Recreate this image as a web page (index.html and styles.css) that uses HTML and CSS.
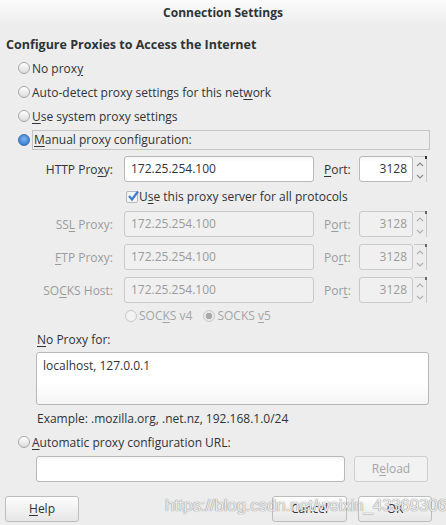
FILE: index.html
```html
<!DOCTYPE html>
<html>
<head>
<meta charset="utf-8">
<link rel="stylesheet" href="styles.css">
</head>
<body>
<div class="window">
  <div class="titlebar">Connection Settings</div>
  <div class="content">
    <div class="heading">Configure Proxies to Access the Internet</div>
    <div class="radio-row"><span class="radio"></span><span>No prox<u>y</u></span></div>
    <div class="radio-row"><span class="radio"></span><span>Auto-detect proxy settings for this net<u>w</u>ork</span></div>
    <div class="radio-row"><span class="radio"></span><span><u>U</u>se system proxy settings</span></div>
    <div class="radio-row"><span class="radio checked"></span><span class="focus-box"><u>M</u>anual proxy configuration:</span></div>

    <div class="proxy-row first">
      <label class="plabel">HTTP Pro<u>x</u>y:</label>
      <div class="input">172.25.254.100</div>
      <label class="portlabel"><u>P</u>ort:</label>
      <div class="port">3128</div>
      <div class="spin"><svg width="12" height="26" viewBox="0 0 12 26"><path d="M3 9 L6 6 L9 9" fill="none" stroke="#8a8a8a" stroke-width="1.2"/><path d="M3 18 L6 21 L9 18" fill="none" stroke="#8a8a8a" stroke-width="1.2"/></svg></div>
    </div>

    <div class="check-row">
      <span class="check"><svg width="12" height="12" viewBox="0 0 12 12"><path d="M2 6 L5 9.5 L11 1.5" fill="none" stroke="#3a7fd0" stroke-width="2.2"/></svg></span>
      <span>U<u>s</u>e this proxy server for all protocols</span>
    </div>

    <div class="proxy-row disabled">
      <label class="plabel">SS<u>L</u> Proxy:</label>
      <div class="input">172.25.254.100</div>
      <label class="portlabel">P<u>o</u>rt:</label>
      <div class="port">3128</div>
      <div class="spin"><svg width="12" height="26" viewBox="0 0 12 26"><path d="M3 9 L6 6 L9 9" fill="none" stroke="#b0b0b0" stroke-width="1.2"/><path d="M3 18 L6 21 L9 18" fill="none" stroke="#b0b0b0" stroke-width="1.2"/></svg></div>
    </div>
    <div class="proxy-row disabled">
      <label class="plabel"><u>F</u>TP Proxy:</label>
      <div class="input">172.25.254.100</div>
      <label class="portlabel">Po<u>r</u>t:</label>
      <div class="port">3128</div>
      <div class="spin"><svg width="12" height="26" viewBox="0 0 12 26"><path d="M3 9 L6 6 L9 9" fill="none" stroke="#b0b0b0" stroke-width="1.2"/><path d="M3 18 L6 21 L9 18" fill="none" stroke="#b0b0b0" stroke-width="1.2"/></svg></div>
    </div>
    <div class="proxy-row disabled">
      <label class="plabel">SO<u>C</u>KS Host:</label>
      <div class="input">172.25.254.100</div>
      <label class="portlabel">Por<u>t</u>:</label>
      <div class="port">3128</div>
      <div class="spin"><svg width="12" height="26" viewBox="0 0 12 26"><path d="M3 9 L6 6 L9 9" fill="none" stroke="#b0b0b0" stroke-width="1.2"/><path d="M3 18 L6 21 L9 18" fill="none" stroke="#b0b0b0" stroke-width="1.2"/></svg></div>
    </div>

    <div class="socks-row">
      <span class="radio dis"></span><span>SOC<u>K</u>S v4</span>
      <span class="radio dis checked-dis gap"></span><span>SOCKS <u>v</u>5</span>
    </div>

    <div class="noproxy-label"><u>N</u>o Proxy for:</div>
    <div class="textarea">localhost, 127.0.0.1</div>
    <div class="example">Example: .mozilla.org, .net.nz, 192.168.1.0/24</div>

    <div class="radio-row auto"><span class="radio"></span><span><u>A</u>utomatic proxy configuration URL:</span></div>
    <div class="url-row">
      <div class="input url"></div>
      <div class="button reload">R<u>e</u>load</div>
    </div>

    <div class="button-row">
      <div class="button help"><u>H</u>elp</div>
      <div class="spacer"></div>
      <div class="button cancel">Cancel</div>
      <div class="button ok">OK</div>
    </div>
  </div>
  <div class="watermark">https://blog.csdn.net/weixin_43369306</div>
</div>
</body>
</html>
```

FILE: styles.css
```css
* { box-sizing: border-box; }
html, body { margin: 0; padding: 0; }
body {
  width: 446px;
  height: 525px;
  background: #ededed;
  font-family: "Open Sans", "DejaVu Sans", sans-serif;
  font-size: 12px;
  color: #2e3436;
  overflow: hidden;
}
u { text-decoration: underline; text-underline-offset: 2px; }
.window { position: relative; width: 446px; height: 525px; }
.titlebar {
  height: 27px;
  line-height: 25px;
  text-align: center;
  font-weight: bold;
  font-size: 12px;
  color: #2e3436;
  background: linear-gradient(#fbfbfb, #ececec);
}
.content { padding: 0; }
.heading {
  font-weight: bold;
  font-size: 12.5px;
  padding-left: 6px;
  margin-top: 9px;
  height: 20px;
  line-height: 18px;
}
.radio-row {
  display: flex;
  align-items: center;
  height: 24px;
  padding-left: 18px;
}
.radio {
  width: 12px;
  height: 12px;
  border-radius: 50%;
  border: 1px solid #a7a7a7;
  background: linear-gradient(#ffffff, #dcdcdc);
  margin-right: 2px;
  flex: none;
}
.radio.checked {
  border-color: #3a6fb0;
  background: radial-gradient(circle at 50% 40%, #7fb4ec, #3d82d3 70%);
}
.radio.dis { border-color: #c8c8c8; background: #f3f3f3; }
.radio.checked-dis {
  background: radial-gradient(circle, #a9a9a9 0 3px, #e8e8e8 3.5px);
}
.focus-box {
  flex: 1;
  margin-right: 16px;
  height: 20px;
  line-height: 18px;
  border: 1px solid #c4c4c4;
  padding-left: 1px;
}
.proxy-row {
  display: flex;
  align-items: center;
  height: 26px;
  margin-bottom: 7px;
}
.proxy-row.first { margin-top: 4px; margin-bottom: 0; }
.plabel {
  width: 115px;
  text-align: right;
  padding-right: 2px;
}
.input {
  height: 26px;
  border: 1px solid #b8b8b4;
  border-radius: 3px;
  background: linear-gradient(#f6f6f6, #ffffff 5px);
  line-height: 24px;
  padding-left: 6px;
}
.proxy-row .input { width: 190px; margin-left: 9px; }
.portlabel { width: 35px; margin-left: 10px; }
.port {
  width: 54px;
  height: 26px;
  border: 1px solid #b8b8b4;
  border-radius: 3px;
  background: linear-gradient(#f6f6f6, #ffffff 5px);
  line-height: 24px;
  text-align: right;
  padding-right: 5px;
}
.spin {
  width: 13px;
  height: 26px;
  margin-left: 1px;
  border-right: 1px solid #c8c8c8;
  border-top: 1px solid #c8c8c8;
  position: relative;
}
.spin::after {
  content: "";
  position: absolute;
  right: -1px;
  top: -1px;
  width: 2px;
  height: 3px;
  background: #333;
}
.spin svg { display: block; }
.proxy-row.disabled { color: #9a9c9c; }
.proxy-row.disabled .input,
.proxy-row.disabled .port {
  background: #f0f0f0;
  border-color: #c9c9c7;
}
.proxy-row.disabled .spin::after { background: #666; }
.check-row {
  display: flex;
  align-items: center;
  height: 29px;
  padding-left: 126px;
}
.check {
  width: 12px;
  height: 12px;
  border: 1px solid #b8b8b8;
  border-radius: 2px;
  background: #f4f4f4;
  margin-right: 1px;
  position: relative;
}
.check svg { position: absolute; left: 0; top: -2px; }
.socks-row {
  display: flex;
  align-items: center;
  height: 29px;
  padding-left: 125px;
  color: #a3a5a5;
  margin-top: -9px;
}
.socks-row .radio { margin-right: 2px; }
.socks-row .gap { margin-left: 11px; }
.noproxy-label {
  padding-left: 37px;
  height: 22px;
  line-height: 20px;
}
.textarea {
  margin-left: 36px;
  width: 393px;
  height: 53px;
  border: 1px solid #b8b8b4;
  border-radius: 3px;
  background: linear-gradient(#ffffff, #ffffff 60%, #f4f4f4);
  padding: 4px 6px;
  line-height: 18px;
}
.example {
  padding-left: 37px;
  height: 26px;
  line-height: 27px;
}
.radio-row.auto { height: 22px; }
.url-row {
  display: flex;
  margin-top: 3px;
  padding-left: 36px;
  height: 26px;
}
.input.url { width: 309px; }
.button {
  height: 26px;
  border: 1px solid #bdbdbd;
  border-radius: 3px;
  background: linear-gradient(#fdfdfd, #e6e6e6);
  text-align: center;
  line-height: 24px;
}
.reload {
  width: 74px;
  margin-left: 9px;
  color: #a3a5a5;
  background: #f2f2f2;
  border-color: #cfcfcf;
}
.button-row {
  display: flex;
  margin-top: 14px;
  padding-left: 5px;
  padding-right: 14px;
}
.help { width: 74px; }
.spacer { flex: 1; }
.cancel { width: 75px; }
.ok { width: 74px; margin-left: 11px; }
.watermark {
  position: absolute;
  left: 165px;
  top: 496px;
  font-family: "Liberation Sans", Arial, sans-serif;
  font-size: 17px;
  color: rgba(255, 255, 255, 0.85);
  text-shadow: 0 0 1px rgba(110, 110, 110, 0.8), 0 0 1px rgba(110, 110, 110, 0.6);
  white-space: nowrap;
  letter-spacing: -0.2px;
}
```
